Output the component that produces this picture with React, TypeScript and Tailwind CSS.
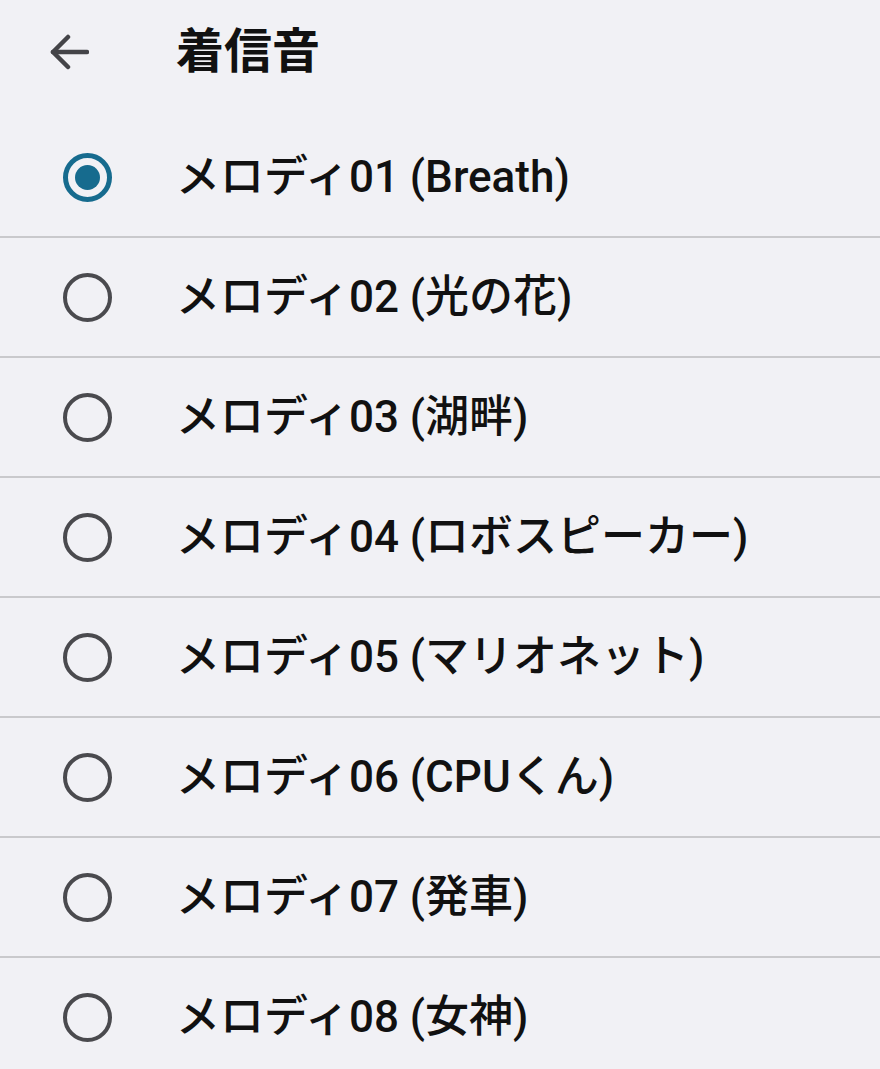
const melodies = [
  "メロディ01 (Breath)",
  "メロディ02 (光の花)",
  "メロディ03 (湖畔)",
  "メロディ04 (ロボスピーカー)",
  "メロディ05 (マリオネット)",
  "メロディ06 (CPUくん)",
  "メロディ07 (発車)",
  "メロディ08 (女神)",
];

const font = { fontFamily: 'Roboto, "Noto Sans CJK JP", sans-serif' };

const Radio = ({ checked }: { checked: boolean }) => {
  if (checked) {
    return (
      <div className="flex h-[49px] w-[49px] shrink-0 items-center justify-center rounded-full border-[5px] border-[#166b8e]">
        <div className="h-[25px] w-[25px] rounded-full bg-[#166b8e]" />
      </div>
    );
  }
  return <div className="h-[49px] w-[49px] shrink-0 rounded-full border-[4px] border-[#4a4a4e]" />;
};

export default function App() {
  return (
    <div className="min-h-screen w-full overflow-hidden bg-[#f1f1f5] text-[#111]" style={font}>
      {/* header */}
      <div className="flex h-[118px] items-center pb-[14px] pl-[49px]">
        <svg width="40" height="36" viewBox="0 0 40 36" fill="none" stroke="#444448" strokeWidth="4.5" strokeLinecap="round" strokeLinejoin="round">
          <path d="M38 18H4" />
          <path d="M19 3L4 18l15 15" />
        </svg>
        <h1 className="ml-[87px] text-[48px] font-bold leading-none">着信音</h1>
      </div>

      {melodies.map((name, i) => (
        <div key={name} className="flex h-[120px] items-center border-b-2 border-[#c9c9cc] pl-[63px]">
          <Radio checked={i === 0} />
          <span className="ml-[64px] text-[44px] font-medium leading-none">{name}</span>
        </div>
      ))}
    </div>
  );
}
